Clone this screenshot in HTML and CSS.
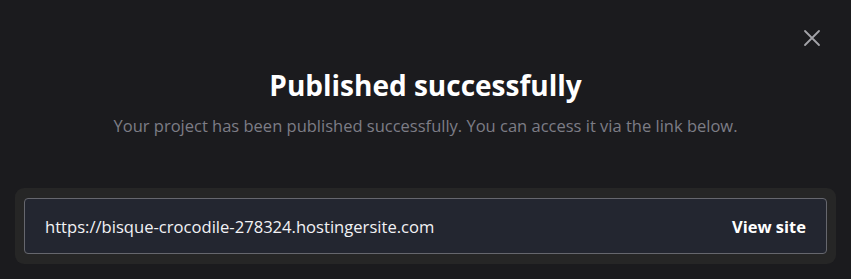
FILE: index.html
```html
<!DOCTYPE html>
<html>
<head>
<meta charset="utf-8">
<link rel="stylesheet" href="styles.css">
</head>
<body>
<div class="modal">
  <button class="close" aria-label="Close">
    <svg width="18" height="18" viewBox="0 0 18 18"><path d="M2 2L16 16M16 2L2 16" stroke="#a3a3a8" stroke-width="1.8" stroke-linecap="round"/></svg>
  </button>
  <h1 class="title">Published successfully</h1>
  <p class="subtitle">Your project has been published successfully. You can access it via the link below.</p>
  <div class="link-panel">
    <div class="link-box">
      <span class="url">https://bisque-crocodile-278324.hostingersite.com</span>
      <a class="view" href="#">View site</a>
    </div>
  </div>
</div>
</body>
</html>
```
FILE: styles.css
```css
html, body {
  margin: 0;
  padding: 0;
  background: #1b1b1e;
  width: 851px;
  height: 279px;
  overflow: hidden;
  font-family: "Open Sans", "Noto Sans", sans-serif;
}
.modal {
  position: relative;
  display: flex;
  flex-direction: column;
  align-items: center;
  padding: 0 15px;
}
.close {
  position: absolute;
  top: 29px;
  right: 30px;
  background: none;
  border: none;
  padding: 0;
  width: 18px;
  height: 18px;
  cursor: pointer;
}
.close svg { display: block; }
.title {
  margin: 66px 0 0;
  font-size: 28px;
  line-height: 38px;
  font-weight: 700;
  color: #ffffff;
}
.subtitle {
  margin: 11px 0 0;
  font-size: 16.5px;
  line-height: 22px;
  color: #7d7d86;
}
.link-panel {
  margin-top: 51px;
  align-self: stretch;
  background: #262626;
  border-radius: 9px;
  padding: 10px 9px 10px 9px;
}
.link-box {
  display: flex;
  align-items: center;
  justify-content: space-between;
  height: 54px;
  background: #232630;
  border: 1px solid #66676e;
  border-radius: 4px;
  padding: 0 20px;
}
.url {
  font-size: 16.6px;
  color: #f2f2f5;
}
.view {
  font-size: 16.5px;
  font-weight: 700;
  color: #ffffff;
  text-decoration: none;
}
```
